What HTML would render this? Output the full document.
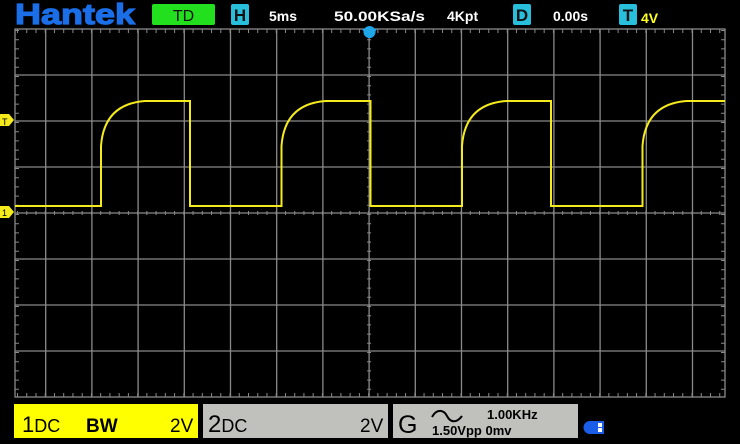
<!DOCTYPE html>
<html><head><meta charset="utf-8"><style>
html,body{margin:0;padding:0;background:#000;width:740px;height:444px;overflow:hidden}
svg{display:block}
text{font-family:"Liberation Sans",Arial,sans-serif}
</style></head><body>
<svg width="740" height="444" viewBox="0 0 740 444" xmlns="http://www.w3.org/2000/svg">
<rect width="740" height="444" fill="#000"/>
<!-- header -->
<text x="15" y="24" font-size="29" font-weight="bold" fill="#1a6ee8" stroke="#1a6ee8" stroke-width="1.2" textLength="120" lengthAdjust="spacingAndGlyphs">Hantek</text>
<rect x="152" y="4" width="63" height="21" rx="2" fill="#22e01e"/>
<text x="183.5" y="21" font-size="16" text-anchor="middle" fill="#111">TD</text>
<rect x="231" y="4" width="18" height="21" rx="2" fill="#27bfdc"/>
<text x="240" y="21" font-size="17" font-weight="bold" text-anchor="middle" fill="#111">H</text>
<g font-size="14" font-weight="bold" fill="#fff">
<text x="269" y="21">5ms</text>
<text x="334" y="21" textLength="91" lengthAdjust="spacingAndGlyphs">50.00KSa/s</text>
<text x="447" y="21">4Kpt</text>
<text x="553" y="21">0.00s</text>
</g>
<rect x="513" y="4" width="18" height="21" rx="2" fill="#27bfdc"/>
<text x="522" y="21" font-size="17" font-weight="bold" text-anchor="middle" fill="#111">D</text>
<rect x="619" y="4" width="18" height="21" rx="2" fill="#27bfdc"/>
<text x="628" y="21" font-size="17" font-weight="bold" text-anchor="middle" fill="#111">T</text>
<text x="641" y="23" font-size="14" font-weight="bold" fill="#ffff20">4V</text>
<!-- grid -->
<g stroke="#8a8a8a" stroke-width="1.3" fill="none">
<rect x="15" y="29" width="710" height="368"/>
<path d="M45.7 29V397M91.9 29V397M138.1 29V397M184.3 29V397M230.5 29V397M276.7 29V397M322.9 29V397M369.1 29V397M415.3 29V397M461.5 29V397M507.7 29V397M553.9 29V397M600.1 29V397M646.3 29V397M692.5 29V397"/>
<path d="M15 75H725M15 121H725M15 167H725M15 213H725M15 259H725M15 305H725M15 351H725"/>
</g>
<g stroke="#8a8a8a" stroke-width="1" fill="none">
<path d="M15 31H725M15 395H725M15 213H725" stroke-width="4" stroke-dasharray="1 8.24" stroke-dashoffset="-2"/>
<path d="M17 29V397M723 29V397M369.1 29V397" stroke-width="4" stroke-dasharray="1 8.2" stroke-dashoffset="-1"/>
</g>
<!-- waveform -->
<clipPath id="c"><rect x="15" y="29" width="710" height="368"/></clipPath>
<g clip-path="url(#c)" stroke="#f4ea1c" stroke-width="2" fill="none">
<path d="M15 206H101V146C103 118 118 103 145 101H190V206H281.5V146C283.5 118 298.5 103 325.5 101H370.5V206H462V146C464 118 479 103 506 101H551V206H642.5V146C644.5 118 659.5 103 686.5 101H731V206"/>
</g>
<!-- markers -->
<path d="M0 114H9L14 120L9 126H0Z" fill="#f4ea1c"/>
<text x="2" y="125" font-size="9" fill="#000">T</text>
<path d="M0 206H9L14 212L9 218H0Z" fill="#f4ea1c"/>
<text x="2" y="216" font-size="9" fill="#000">1</text>
<path d="M362 29H377L371 38H368Z" fill="#1ea6e8"/>
<circle cx="369.5" cy="32" r="6" fill="#1ea6e8"/>
<!-- bottom -->
<rect x="14" y="404" width="184" height="34" fill="#ffff00"/>
<text x="22" y="432" font-size="22" fill="#000">1<tspan font-size="18">DC</tspan></text>
<text x="86" y="432" font-size="19" font-weight="bold" fill="#000">BW</text>
<text x="170" y="432" font-size="19" fill="#000">2V</text>
<rect x="203" y="404" width="185" height="34" fill="#c0c0bc"/>
<text x="208" y="432" font-size="24" fill="#000">2<tspan font-size="18">DC</tspan></text>
<text x="360" y="432" font-size="19" fill="#000">2V</text>
<rect x="393" y="404" width="185" height="34" fill="#c0c0bc"/>
<text x="398" y="433" font-size="25" fill="#000">G</text>
<path d="M432 417C437 408 444 410 447 416S456 424 462 416" stroke="#000" stroke-width="2" fill="none"/>
<text x="487" y="419" font-size="13" font-weight="bold" fill="#000">1.00KHz</text>
<text x="432" y="435" font-size="13" font-weight="bold" fill="#000">1.50Vpp 0mv</text>
<path d="M590 421H596V434H590A6.5 6.5 0 0 1 590 421Z" fill="#1a5ee8"/>
<rect x="596" y="421" width="8" height="13" fill="#1a5ee8"/>
<rect x="598" y="423" width="4" height="4" fill="#fff"/><rect x="598" y="428" width="4" height="4" fill="#fff"/>
</svg>
</body></html>
